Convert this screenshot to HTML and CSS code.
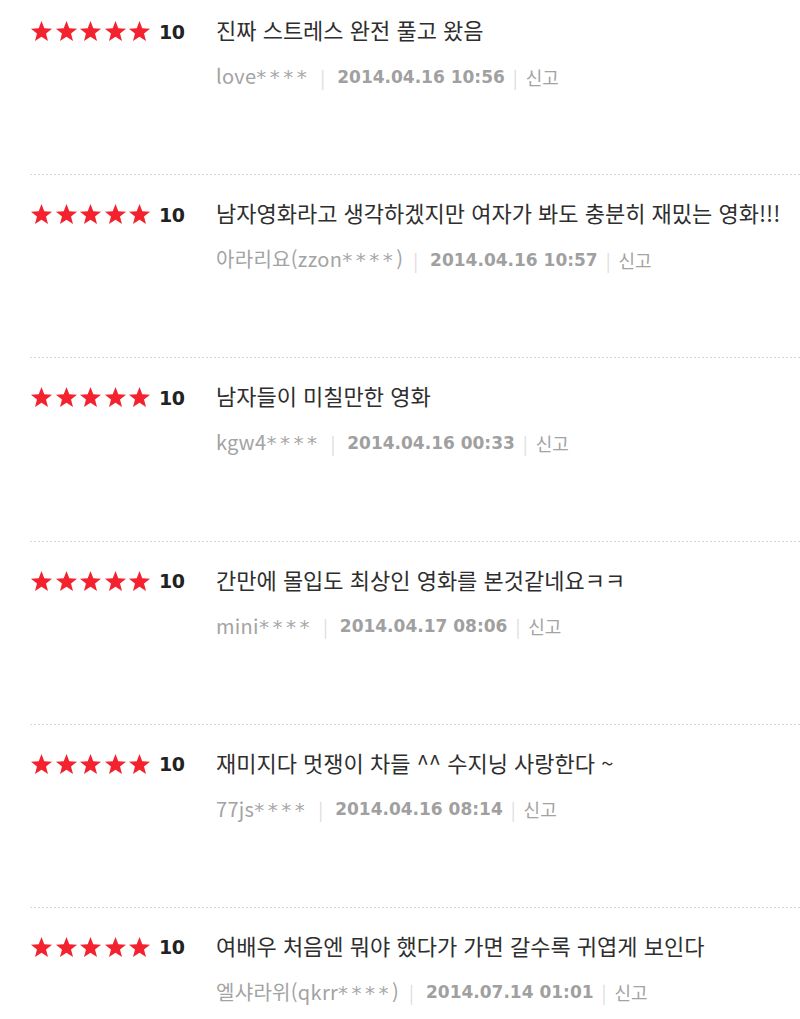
FILE: index.html
```html
<!DOCTYPE html>
<html lang="ko">
<head>
<meta charset="utf-8">
<link rel="stylesheet" href="styles.css">
</head>
<body>
<svg width="0" height="0" class="defs" aria-hidden="true">
  <defs>
    <symbol id="star" viewBox="0 0 24 24">
      <polygon points="12,1 14.9,8.6 23,9 16.7,14.1 18.8,22 12,17.6 5.2,22 7.3,14.1 1,9 9.1,8.6"/>
    </symbol>
  </defs>
</svg>
<ul class="reviews">
  <li class="review">
    <div class="rating">
      <span class="stars"><svg><use href="#star"/></svg><svg><use href="#star"/></svg><svg><use href="#star"/></svg><svg><use href="#star"/></svg><svg><use href="#star"/></svg></span>
      <span class="score">10</span>
    </div>
    <div class="body">
      <p class="comment">진짜 스트레스 완전 풀고 왔음</p>
      <p class="meta"><span class="user">love<span class="mask">****</span></span><span class="bar">|</span><span class="date">2014.04.16 10:56</span><span class="bar bar-tight">|</span><span class="report">신고</span></p>
    </div>
  </li>
  <li class="review">
    <div class="rating">
      <span class="stars"><svg><use href="#star"/></svg><svg><use href="#star"/></svg><svg><use href="#star"/></svg><svg><use href="#star"/></svg><svg><use href="#star"/></svg></span>
      <span class="score">10</span>
    </div>
    <div class="body">
      <p class="comment">남자영화라고 생각하겠지만 여자가 봐도 충분히 재밌는 영화!!!</p>
      <p class="meta"><span class="user">아라리요(zzon<span class="mask">****</span>)</span><span class="bar">|</span><span class="date">2014.04.16 10:57</span><span class="bar bar-tight">|</span><span class="report">신고</span></p>
    </div>
  </li>
  <li class="review">
    <div class="rating">
      <span class="stars"><svg><use href="#star"/></svg><svg><use href="#star"/></svg><svg><use href="#star"/></svg><svg><use href="#star"/></svg><svg><use href="#star"/></svg></span>
      <span class="score">10</span>
    </div>
    <div class="body">
      <p class="comment">남자들이 미칠만한 영화</p>
      <p class="meta"><span class="user">kgw4<span class="mask">****</span></span><span class="bar">|</span><span class="date">2014.04.16 00:33</span><span class="bar bar-tight">|</span><span class="report">신고</span></p>
    </div>
  </li>
  <li class="review">
    <div class="rating">
      <span class="stars"><svg><use href="#star"/></svg><svg><use href="#star"/></svg><svg><use href="#star"/></svg><svg><use href="#star"/></svg><svg><use href="#star"/></svg></span>
      <span class="score">10</span>
    </div>
    <div class="body">
      <p class="comment">간만에 몰입도 최상인 영화를 본것같네요ㅋㅋ</p>
      <p class="meta"><span class="user">mini<span class="mask">****</span></span><span class="bar">|</span><span class="date">2014.04.17 08:06</span><span class="bar bar-tight">|</span><span class="report">신고</span></p>
    </div>
  </li>
  <li class="review">
    <div class="rating">
      <span class="stars"><svg><use href="#star"/></svg><svg><use href="#star"/></svg><svg><use href="#star"/></svg><svg><use href="#star"/></svg><svg><use href="#star"/></svg></span>
      <span class="score">10</span>
    </div>
    <div class="body">
      <p class="comment">재미지다 멋쟁이 차들 ^^ 수지닝 사랑한다 ~</p>
      <p class="meta"><span class="user">77js<span class="mask">****</span></span><span class="bar">|</span><span class="date">2014.04.16 08:14</span><span class="bar bar-tight">|</span><span class="report">신고</span></p>
    </div>
  </li>
  <li class="review">
    <div class="rating">
      <span class="stars"><svg><use href="#star"/></svg><svg><use href="#star"/></svg><svg><use href="#star"/></svg><svg><use href="#star"/></svg><svg><use href="#star"/></svg></span>
      <span class="score">10</span>
    </div>
    <div class="body">
      <p class="comment">여배우 처음엔 뭐야 했다가 가면 갈수록 귀엽게 보인다</p>
      <p class="meta"><span class="user">엘샤라위(qkrr<span class="mask">****</span>)</span><span class="bar">|</span><span class="date">2014.07.14 01:01</span><span class="bar bar-tight">|</span><span class="report">신고</span></p>
    </div>
  </li>
</ul>
</body>
</html>
```
FILE: styles.css
```css
html, body {
  margin: 0;
  padding: 0;
  background: #ffffff;
}

body {
  font-family: "Noto Sans CJK KR", "Noto Sans", sans-serif;
  height: 1019px;
  overflow: hidden;
}

.defs {
  position: absolute;
  width: 0;
  height: 0;
}

.reviews {
  list-style: none;
  margin: 0;
  padding: 0 0 0 30px;
}

.review {
  display: flex;
  align-items: flex-start;
  height: 183.2px;
  box-sizing: border-box;
  padding-top: 28px;
  background-image: repeating-linear-gradient(to right, #d6d6d6 0 2px, transparent 2px 4px);
  background-size: 100% 1px;
  background-repeat: no-repeat;
  background-position: left bottom;
}

.review:first-child {
  height: 175.2px;
  padding-top: 20px;
}

.review:last-child {
  height: auto;
  background: none;
}

.rating {
  display: flex;
  align-items: center;
  width: 186px;
  height: 23px;
}

.stars {
  display: flex;
  gap: 1.5px;
}

.stars svg {
  width: 23px;
  height: 23px;
  fill: #f3222e;
}

.score {
  margin-left: 8px;
  font-family: "DejaVu Sans", sans-serif;
  font-weight: bold;
  font-size: 19px;
  color: #222222;
  letter-spacing: -0.5px;
}

.body {
  display: flex;
  flex-direction: column;
  gap: 23px;
}

.comment {
  margin: -3px 0 0;
  font-size: 22px;
  line-height: 24px;
  color: #2e2e2e;
}

.meta {
  margin: 0;
  display: flex;
  align-items: center;
  font-size: 20px;
  line-height: 24px;
  color: #a3a3a3;
}

.user {
  letter-spacing: 0.3px;
}

.mask {
  font-family: "DejaVu Sans", sans-serif;
  font-size: 20px;
  letter-spacing: 3.5px;
  color: #a8a8a8;
}

.bar {
  color: #dddddd;
  margin: 0 12px 0 10px;
  font-size: 18px;
}

.bar-tight {
  margin: 0 8px 0 8px;
}

.date {
  font-family: "DejaVu Sans", sans-serif;
  font-weight: bold;
  font-size: 17px;
  color: #a0a0a0;
}

.report {
  color: #a3a3a3;
  font-size: 18px;
}
```
